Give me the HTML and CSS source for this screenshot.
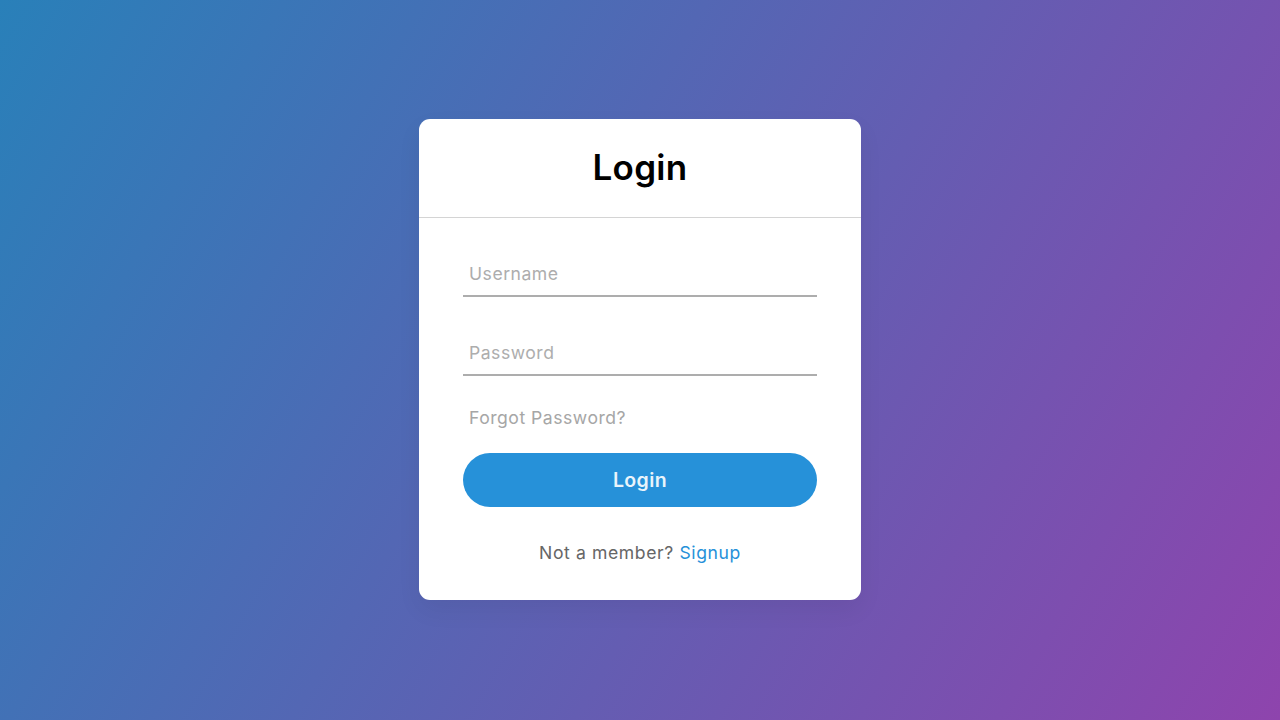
FILE: index.html
```html
<!DOCTYPE html>
<html lang="en">
<head>
<meta charset="utf-8">
<title>Login</title>
<link rel="stylesheet" href="styles.css">
</head>
<body>
  <div class="card">
    <h1 class="title">Login</h1>
    <form class="form">
      <div class="field">
        <input class="input" type="text">
        <label class="label">Username</label>
      </div>
      <div class="field">
        <input class="input" type="password">
        <label class="label">Password</label>
      </div>
      <div class="forgot">Forgot Password?</div>
      <button class="btn" type="button">Login</button>
      <div class="signup">Not a member? <a class="link" href="#">Signup</a></div>
    </form>
  </div>
</body>
</html>
```
FILE: styles.css
```css
* { box-sizing: border-box; }
html, body { margin: 0; padding: 0; }
body {
  height: 720px;
  display: flex;
  align-items: flex-start;
  justify-content: center;
  background: linear-gradient(120deg, #2980b9, #8e44ad);
  font-family: "Inter", "Open Sans", sans-serif;
}
.card {
  margin-top: 119px;
  width: 442px;
  height: 481px;
  background: #fff;
  border-radius: 11px;
  box-shadow: 0 10px 25px rgba(0, 0, 0, 0.06);
}
.title {
  margin: 0;
  height: 99px;
  padding-bottom: 2px;
  display: flex;
  align-items: center;
  justify-content: center;
  font-size: 35px;
  font-weight: 600;
  color: #000;
  border-bottom: 1px solid #d4d4d4;
  letter-spacing: 0.3px;
}
.form {
  padding: 0 44px;
}
.field {
  position: relative;
  margin-top: 33px;
  border-bottom: 2px solid #adadad;
}
.input {
  display: block;
  width: 100%;
  height: 44px;
  padding: 0 6px;
  border: none;
  outline: none;
  background: none;
  font-size: 17.6px;
}
.label {
  position: absolute;
  left: 6px;
  top: 50%;
  transform: translateY(-50%);
  font-size: 17.6px;
  letter-spacing: 0.5px;
  color: #adadad;
  pointer-events: none;
}
.forgot {
  margin: 31px 0 0 6px;
  font-size: 17.6px;
  letter-spacing: 0.5px;
  color: #a6a6a6;
  line-height: 22px;
}
.btn {
  display: block;
  width: 100%;
  height: 54px;
  margin-top: 24px;
  border: none;
  border-radius: 27px;
  background: #2691d9;
  color: #e9f4fb;
  font-family: inherit;
  font-size: 19.5px;
  font-weight: 600;
  letter-spacing: 0.4px;
}
.signup {
  margin-top: 35px;
  text-align: center;
  font-size: 17.6px;
  letter-spacing: 0.6px;
  color: #666;
  line-height: 22px;
}
.link {
  color: #2691d9;
  text-decoration: none;
}
```
